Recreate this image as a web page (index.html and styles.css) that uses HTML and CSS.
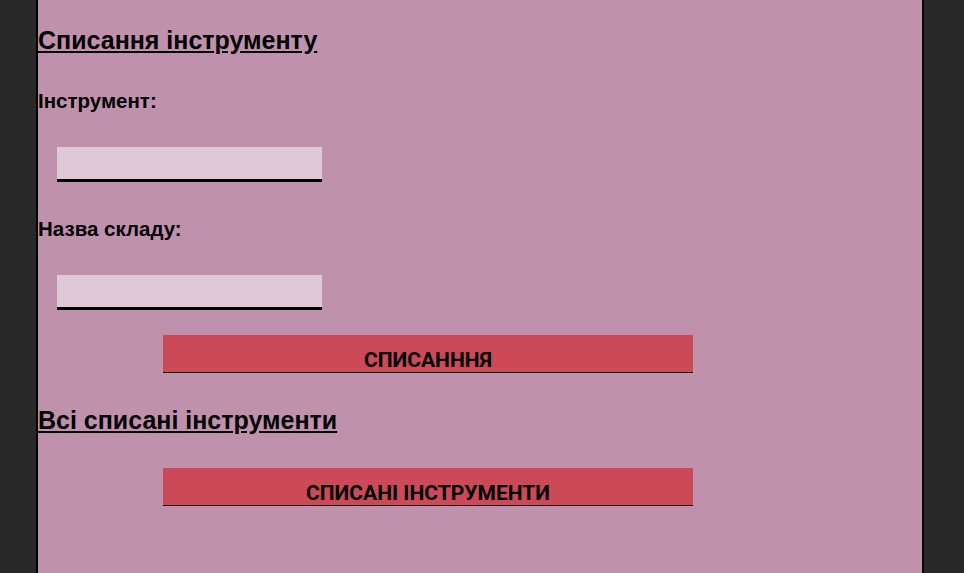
FILE: index.html
```html
<!DOCTYPE html>
<html lang="uk">
<head>
<meta charset="utf-8">
<title>Списання інструменту</title>
<link rel="stylesheet" href="styles.css">
</head>
<body>
<main class="page">
  <form class="form">
    <h2 class="title">Списання інструменту</h2>
    <label class="label" for="tool">Інструмент:</label>
    <input class="field" id="tool" type="text">
    <label class="label label-second" for="store">Назва складу:</label>
    <input class="field" id="store" type="text">
    <button class="btn btn-first" type="button">СПИСАНННЯ</button>
    <h2 class="title title-second">Всі списані інструменти</h2>
    <button class="btn btn-second" type="button">СПИСАНІ ІНСТРУМЕНТИ</button>
  </form>
</main>
</body>
</html>
```

FILE: styles.css
```css
html, body {
  margin: 0;
  padding: 0;
  height: 100%;
}
body {
  background: #292929;
  font-family: "Liberation Sans", Arial, sans-serif;
  color: #000;
}
.page {
  box-sizing: border-box;
  width: 888px;
  min-height: 100%;
  margin-left: 36px;
  background: #bf91ad;
  border-left: 2px solid #000;
  border-right: 2px solid #000;
}
.form {
  display: flex;
  flex-direction: column;
  align-items: flex-start;
  padding-top: 26px;
}
.title {
  margin: 0;
  font-size: 25px;
  font-weight: bold;
  text-decoration: underline;
  line-height: 28px;
}
.label {
  margin-top: 35px;
  font-size: 20.5px;
  font-weight: bold;
  line-height: 23px;
}
.label-second {
  margin-top: 35px;
}
.field {
  box-sizing: border-box;
  margin: 35px 0 0 19px;
  width: 265px;
  height: 35px;
  padding: 0 6px;
  border: none;
  border-bottom: 3px solid #000;
  background: #e0c9d6;
  font-family: "Liberation Sans", Arial, sans-serif;
  font-size: 16px;
  outline: none;
}
.btn {
  box-sizing: border-box;
  margin-left: 125px;
  width: 530px;
  height: 38px;
  padding: 12px 0 0;
  border: none;
  border-bottom: 1px solid #000;
  background: #cc4957;
  font-family: Roboto, "Liberation Sans", sans-serif;
  font-weight: 700;
  font-size: 21px;
  line-height: 24px;
  color: #000;
}
.btn-first {
  margin-top: 25px;
}
.title-second {
  margin-top: 33px;
}
.btn-second {
  margin-top: 34px;
}
```
